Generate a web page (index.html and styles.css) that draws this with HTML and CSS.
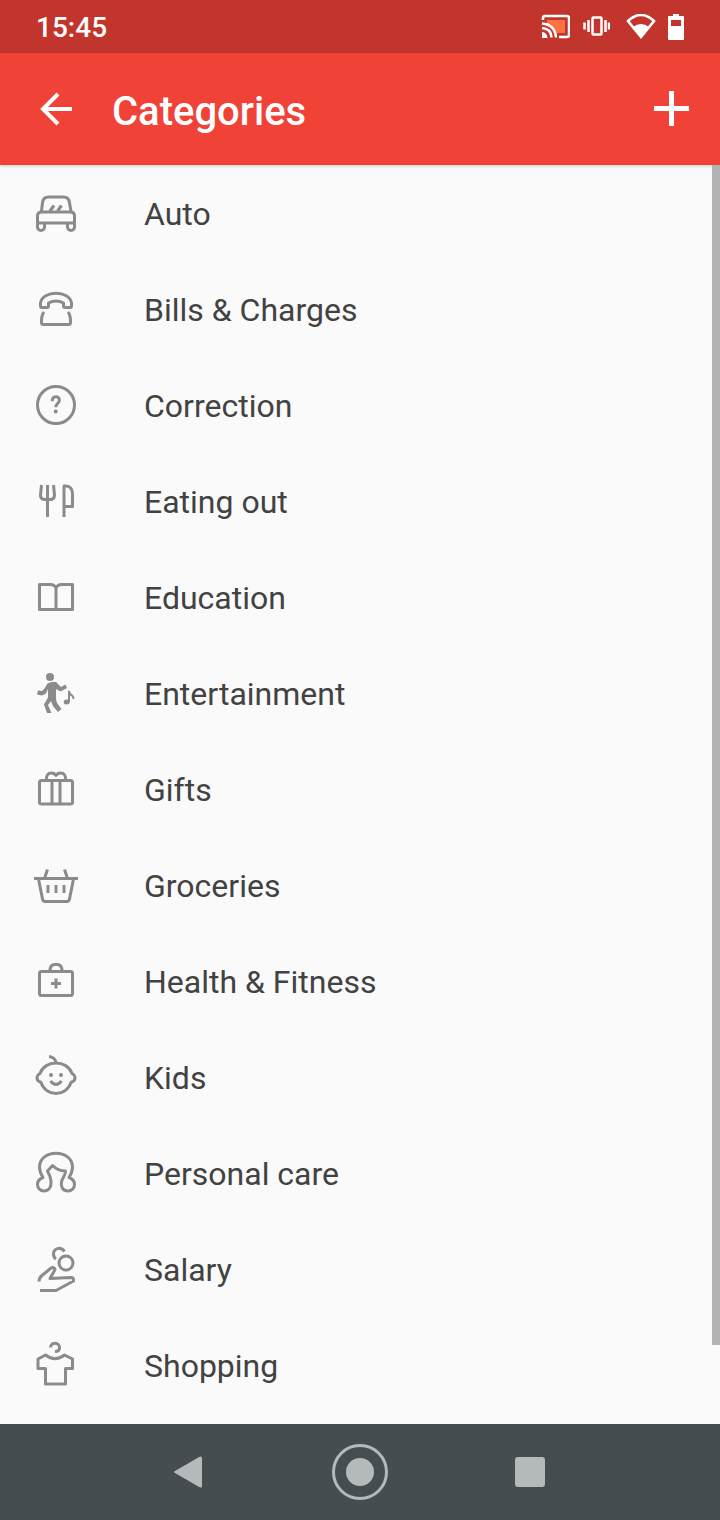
FILE: index.html
```html
<!DOCTYPE html>
<html lang="en">
<head>
<meta charset="utf-8">
<meta name="viewport" content="width=device-width, initial-scale=1">
<title>Categories</title>
<link rel="stylesheet" href="styles.css">
</head>
<body>
<div class="screen">
  <div class="status-bar">
    <time class="clock">15:45</time>
    <div class="status-icons">
      <svg class="status-cast" viewBox="0 0 30 26" aria-hidden="true">
        <path class="cast-fill" d="M7 6h18v13h-9C15 14 11 11 7 10z"/>
        <path class="stroke" d="M3 6V4q0-2 2-2h22q2 0 2 2v17q0 2-2 2h-8M2 9.500q13 1 14 14M2 14q9 .5 9.500 9.500"/>
        <path class="solid" d="M2 18q5 .5 5.500 6H2z"/>
      </svg>
      <svg class="status-vibrate" viewBox="0 0 28 22" aria-hidden="true">
        <rect class="stroke" x="10.500" y="1.500" width="9" height="17" rx="1"/>
        <path class="stroke" d="M2.500 6.500v7M6.500 4v12M23.500 4v12M27 6.500v7"/>
      </svg>
      <svg class="status-wifi" viewBox="0 0 30 26" aria-hidden="true">
        <path class="stroke" d="M2 7Q15-5 28 7L15 23z"/>
        <path class="solid" d="M7 13q8-6 16 0l-8 11z"/>
      </svg>
      <svg class="status-battery" viewBox="0 0 16 26" aria-hidden="true">
        <path class="solid" fill-rule="evenodd" d="M5 0h6v2h4q1 0 1 1v22q0 1-1 1H1q-1 0-1-1V3q0-1 1-1h4zM3 6v6h10V6z"/>
      </svg>
    </div>
  </div>

  <header class="app-bar">
    <button class="bar-button" type="button" aria-label="Back">
      <svg class="bar-icon" viewBox="0 0 40 40" aria-hidden="true"><path d="M36 20H7M22 5L7 20l15 15"/></svg>
    </button>
    <h1 class="title">Categories</h1>
    <button class="bar-button" type="button" aria-label="Add category">
      <svg class="bar-icon bar-icon-add" viewBox="0 0 40 40" aria-hidden="true"><path d="M2 19.500h35M19.500 2v35"/></svg>
    </button>
  </header>

  <main class="content">
    <ul class="categories">
      <li><button class="category" type="button">
        <svg class="icon" viewBox="0 0 48 48" aria-hidden="true"><path d="M9.500 22l1-8q.5-6 6-6h15q5.500 0 6 6l1.500 8M9.500 23h29q4 0 4 4v7h-37v-7q0-4 4-4zM5.500 34v4a3.500 3.500 0 0 0 7 0v-4M35.500 34v4a3.500 3.500 0 0 0 7 0v-4M18 22l4-5.500M25.500 22l4-5.500"/></svg>
        <span class="label">Auto</span></button></li>
      <li><button class="category" type="button">
        <svg class="icon" viewBox="0 0 48 48" aria-hidden="true"><path d="M8.500 18C10 5 38 5 39.500 18v3q0 1.500-1.500 1.500h-5q-1.500 0-1.500-1.500v-3q-7.500-4-15 0v3q0 1.500-1.500 1.500h-5q-1.500 0-1.500-1.500zM12 27q-2.500 3-2.500 9v1.500q0 2 2 2h25q2 0 2-2V36q0-6-2.500-9"/></svg>
        <span class="label">Bills &amp; Charges</span></button></li>
      <li><button class="category" type="button">
        <svg class="icon" viewBox="0 0 48 48" aria-hidden="true"><circle cx="24" cy="24" r="18.500"/><path d="M20.200 20.300c0-6.200 7.600-5.500 7.200-1-.2 3-3.600 3-3.600 7"/><circle class="dot" cx="23.700" cy="30.500" r="2"/></svg>
        <span class="label">Correction</span></button></li>
      <li><button class="category" type="button">
        <svg class="icon" viewBox="0 0 48 48" aria-hidden="true"><path d="M9.500 8L8.500 18q0 4.500 4.500 4.500h5q4.500 0 4.500-4.500L21.500 8M15.500 8v32M32 40V9q8-1 8.500 8v12.500H32"/></svg>
        <span class="label">Eating out</span></button></li>
      <li><button class="category" type="button">
        <svg class="icon" viewBox="0 0 48 48" aria-hidden="true"><path d="M7.500 11.500H18q5 0 6 4 1-4 6-4h10.500v25h-33zM24 15v21"/></svg>
        <span class="label">Education</span></button></li>
      <li><button class="category" type="button">
        <svg class="icon" viewBox="0 0 48 48" aria-hidden="true"><circle class="dot" cx="18" cy="8" r="4"/><path class="dot" d="M15.500 14.500Q20 12 24 13l5 5 4.500-2.500 1.500 3.500-6.500 3.500-4.500-2.500V30l1 4 4.500 6-3.500 3L21 37l-2-5-3 4 3.500 8H15l-3-8.500 4-7V20l-2 4.500-4 2-5-1 1-4 4 .5 2.500-2.500z"/><ellipse class="dot" cx="34.700" cy="33" rx="3" ry="2.500"/><path class="thin" d="M37 33V22.500q.5 3 3 4 1.500 1 1.500 3.500"/></svg>
        <span class="label">Entertainment</span></button></li>
      <li><button class="category" type="button">
        <svg class="icon" viewBox="0 0 48 48" aria-hidden="true"><rect x="7.500" y="15.500" width="33" height="23.500" rx="2"/><path d="M20 15.500V39M28 15.500V39M14.500 15q-.5-7 5-7 3 0 4.500 2.500Q25.500 8 28.500 8q5.500 0 5 7"/></svg>
        <span class="label">Gifts</span></button></li>
      <li><button class="category" type="button">
        <svg class="icon" viewBox="0 0 48 48" aria-hidden="true"><path d="M2 17.500h44M6.500 18l4 20q.5 2.500 2.500 2.500h22q2 0 2.500-2.500l4-20M15.500 8.500l-3 9M32.500 8.500l3 9M16 24v8M24 24v8M32 24v8"/></svg>
        <span class="label">Groceries</span></button></li>
      <li><button class="category" type="button">
        <svg class="icon" viewBox="0 0 48 48" aria-hidden="true"><rect x="7.500" y="14.500" width="33" height="24" rx="2"/><path d="M18 14q0-6.500 5-6.500h2q5 0 5 6.500M24 21.500v10M19 26.500h10"/></svg>
        <span class="label">Health &amp; Fitness</span></button></li>
      <li><button class="category" type="button">
        <svg class="icon" viewBox="0 0 48 48" aria-hidden="true"><path d="M8 20.500C13 6.500 35 6.500 40 20.500q3 1.500 3 4.500t-4 4.500C34 44 14 44 9 29.500Q5 28 5 25t3-4.500zM24 10q-1-6-7-6.500M18.500 28q5.500 7 11 0"/><circle class="dot" cx="19" cy="22" r="2"/><circle class="dot" cx="29" cy="22" r="2"/></svg>
        <span class="label">Kids</span></button></li>
      <li><button class="category" type="button">
        <svg class="icon" viewBox="0 0 48 48" aria-hidden="true"><path d="M11 28.500Q7.500 23 7.500 18C8-.5 40-.5 40.500 18q0 5-3.500 10.500 5.500 2 5.500 7a6.500 6.500 0 0 1-6.500 6.500c-5.500 0-7.500-4.500-6.500-9.500 1-3.500 4-6 4-10.500Q26 22 20.500 16.500L15.500 22q3 5.500 3.500 10c.5 6-2 10-7 10a6.500 6.500 0 0 1-6.500-6.500q0-5 5.500-7z"/></svg>
        <span class="label">Personal care</span></button></li>
      <li><button class="category" type="button">
        <svg class="icon" viewBox="0 0 48 48" aria-hidden="true"><circle cx="34" cy="18" r="7"/><path d="M32.500 6.500C28.500 1 21.500 3.500 21.500 9q0 3.500 2.500 5M7 36.500q0-3.500 3-6l8.500-7q2-1.500 3.500-.5 1.500 1 .5 2.500l-4.500 8 21-1q2.500 0 2.500 2v1.500L24 45.500H8"/></svg>
        <span class="label">Salary</span></button></li>
      <li><button class="category" type="button">
        <svg class="icon" viewBox="0 0 48 48" aria-hidden="true"><path d="M18.500 6.500C19 .5 27.500 1 27.500 6.500q0 4-4.500 4M13.500 14q9.500 7.500 19 0l8 4v9.500h-7V43h-20V27.500h-7.500V18z"/></svg>
        <span class="label">Shopping</span></button></li>
    </ul>
    <div class="scroll-thumb"></div>
  </main>

  <nav class="nav-bar" aria-label="System navigation">
    <button class="nav-button" type="button" aria-label="Back"><svg viewBox="0 0 56 56" aria-hidden="true"><path d="M40 14v28q0 2-2 1.500L13 29q-2-1 0-2l25-14.500q2-.5 2 1.500z"/></svg></button>
    <button class="nav-button" type="button" aria-label="Home"><svg viewBox="0 0 56 56" aria-hidden="true"><circle class="ring" cx="28" cy="28" r="26.500"/><circle cx="28" cy="28" r="14"/></svg></button>
    <button class="nav-button" type="button" aria-label="Recent apps"><svg viewBox="0 0 56 56" aria-hidden="true"><rect x="13" y="13" width="30" height="30" rx="3"/></svg></button>
  </nav>
</div>
</body>
</html>
```
FILE: styles.css
```css
* {
  box-sizing: border-box;
}

body {
  margin: 0;
  background: #fafafa;
  color: #424242;
  font-family: Roboto, "Liberation Sans", sans-serif;
}

button {
  margin: 0;
  padding: 0;
  border: 0;
  background: none;
  color: inherit;
  font: inherit;
  cursor: pointer;
}

svg {
  display: block;
}

.screen {
  display: flex;
  flex-direction: column;
  min-height: 100vh;
}

.status-bar {
  display: flex;
  align-items: center;
  justify-content: space-between;
  height: 53px;
  padding: 0 36px;
  background: #c2352c;
  color: #fff;
}

.clock {
  padding-top: 2px;
  font-size: 28px;
  font-weight: 500;
}

.status-icons {
  display: flex;
  align-items: center;
  gap: 12px;
}

.status-cast,
.status-wifi {
  width: 30px;
  height: 26px;
}

.status-vibrate {
  width: 28px;
  height: 22px;
}

.status-wifi {
  margin-left: 4px;
}

.status-battery {
  width: 16px;
  height: 26px;
}

.stroke {
  fill: none;
  stroke: #fff;
  stroke-width: 2.5;
}

.solid {
  fill: #fff;
}

.cast-fill {
  fill: #ff7043;
}

.app-bar {
  position: relative;
  display: flex;
  align-items: center;
  height: 112px;
  padding: 0 28px 0 36px;
  background: #f04236;
  color: #fff;
  box-shadow: 0 1px 3px rgba(0, 0, 0, 0.2);
}

.bar-icon {
  width: 40px;
  height: 40px;
  fill: none;
  stroke: #fff;
  stroke-width: 4;
}

.bar-icon-add {
  stroke-width: 5;
}

.title {
  flex: 1;
  margin: 0;
  padding: 6px 0 0 36px;
  font-size: 40px;
  font-weight: 500;
  line-height: 48px;
}

.content {
  position: relative;
  flex: 1;
}

.categories {
  margin: 0;
  padding: 0;
  list-style: none;
}

.category {
  display: flex;
  align-items: center;
  gap: 64px;
  width: 100%;
  height: 96px;
  padding: 0 32px;
  font-size: 32px;
  line-height: 40px;
  text-align: left;
}

.label {
  padding-top: 2px;
}

.icon {
  flex: none;
  width: 48px;
  height: 48px;
  fill: none;
  stroke: #8b8b8b;
  stroke-width: 3;
  stroke-linejoin: round;
}

.icon .dot {
  fill: #8b8b8b;
  stroke: none;
}

.icon .thin {
  stroke-width: 2;
}

.scroll-thumb {
  position: absolute;
  top: 0;
  right: 0;
  width: 8px;
  height: 93.7%;
  background: #b3b3b3;
}

.nav-bar {
  display: flex;
  align-items: center;
  justify-content: center;
  gap: 114px;
  height: 96px;
  background: #454d51;
}

.nav-button svg {
  width: 56px;
  height: 56px;
  fill: #b5b9b9;
}

.nav-button .ring {
  fill: none;
  stroke: #b5b9b9;
  stroke-width: 3;
}
```
